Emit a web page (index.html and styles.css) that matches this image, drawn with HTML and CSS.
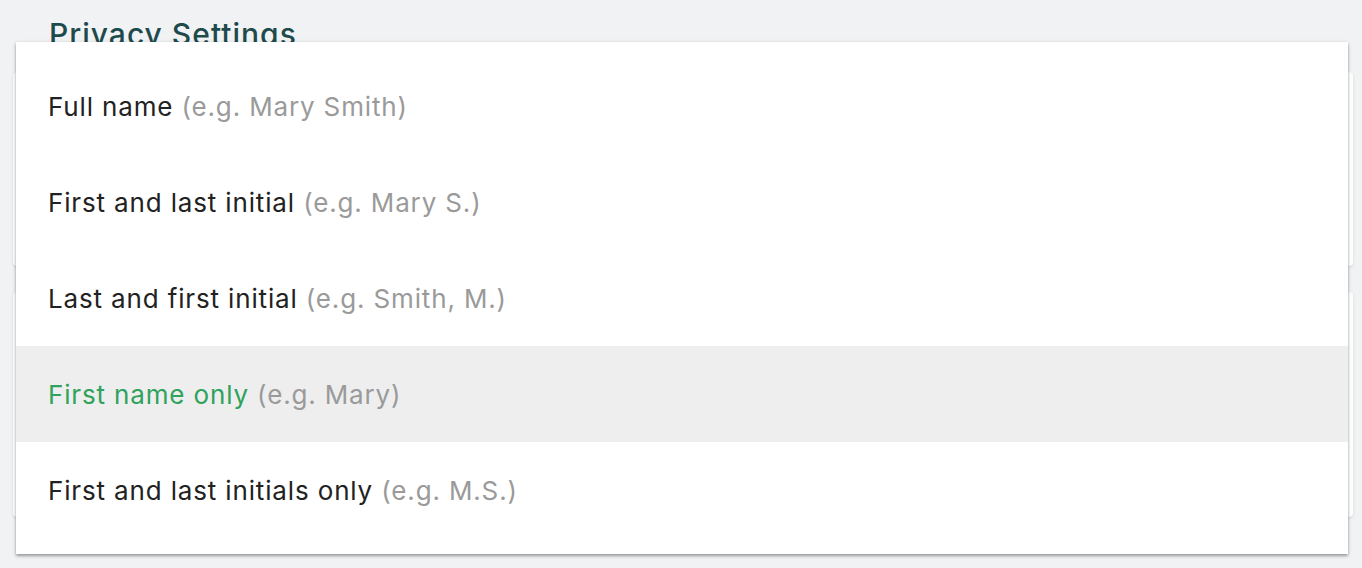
FILE: index.html
```html
<!DOCTYPE html>
<html>
<head>
<meta charset="utf-8">
<link rel="stylesheet" href="styles.css">
</head>
<body>
<div class="page">
  <h1 class="title">Privacy Settings</h1>
  <div class="card card-one"></div>
  <div class="card card-two"></div>
</div>
<ul class="menu">
  <li class="item">Full name <span class="hint">(e.g. Mary Smith)</span></li>
  <li class="item">First and last initial <span class="hint">(e.g. Mary S.)</span></li>
  <li class="item">Last and first initial <span class="hint">(e.g. Smith, M.)</span></li>
  <li class="item selected">First name only <span class="hint">(e.g. Mary)</span></li>
  <li class="item">First and last initials only <span class="hint">(e.g. M.S.)</span></li>
</ul>
</body>
</html>
```
FILE: styles.css
```css
html, body {
  margin: 0;
  padding: 0;
  background: #f1f2f4;
  font-family: Inter, "Noto Sans", sans-serif;
  width: 1362px;
  height: 568px;
  overflow: hidden;
}
.page {
  padding: 0 9px 0 13px;
  display: flex;
  flex-direction: column;
}
.title {
  margin: 0;
  padding: 16px 0 0 36px;
  height: 72px;
  box-sizing: border-box;
  font-size: 30px;
  line-height: 36px;
  letter-spacing: 1px;
  font-weight: 500;
  color: #1e4a4c;
}
.card {
  background: #fff;
  border-radius: 4px;
  box-shadow: 0 1px 3px rgba(0,0,0,0.12);
}
.card-one {
  height: 194px;
}
.card-two {
  margin-top: 26px;
  height: 225px;
}
.menu {
  position: absolute;
  left: 16px;
  top: 42px;
  width: 1332px;
  margin: 0;
  padding: 16px 0;
  list-style: none;
  background: #fff;
  box-shadow: 0 2px 3px rgba(0,0,0,0.35), 0 0 4px rgba(0,0,0,0.08);
}
.item {
  height: 96px;
  display: flex;
  align-items: center;
  padding-left: 32px;
  font-size: 26px;
  letter-spacing: 0.85px;
  color: #222;
  white-space: pre;
}
.hint {
  color: #9a9a9a;
}
.selected {
  background: #eeeeee;
  color: #2fa25c;
}
```
